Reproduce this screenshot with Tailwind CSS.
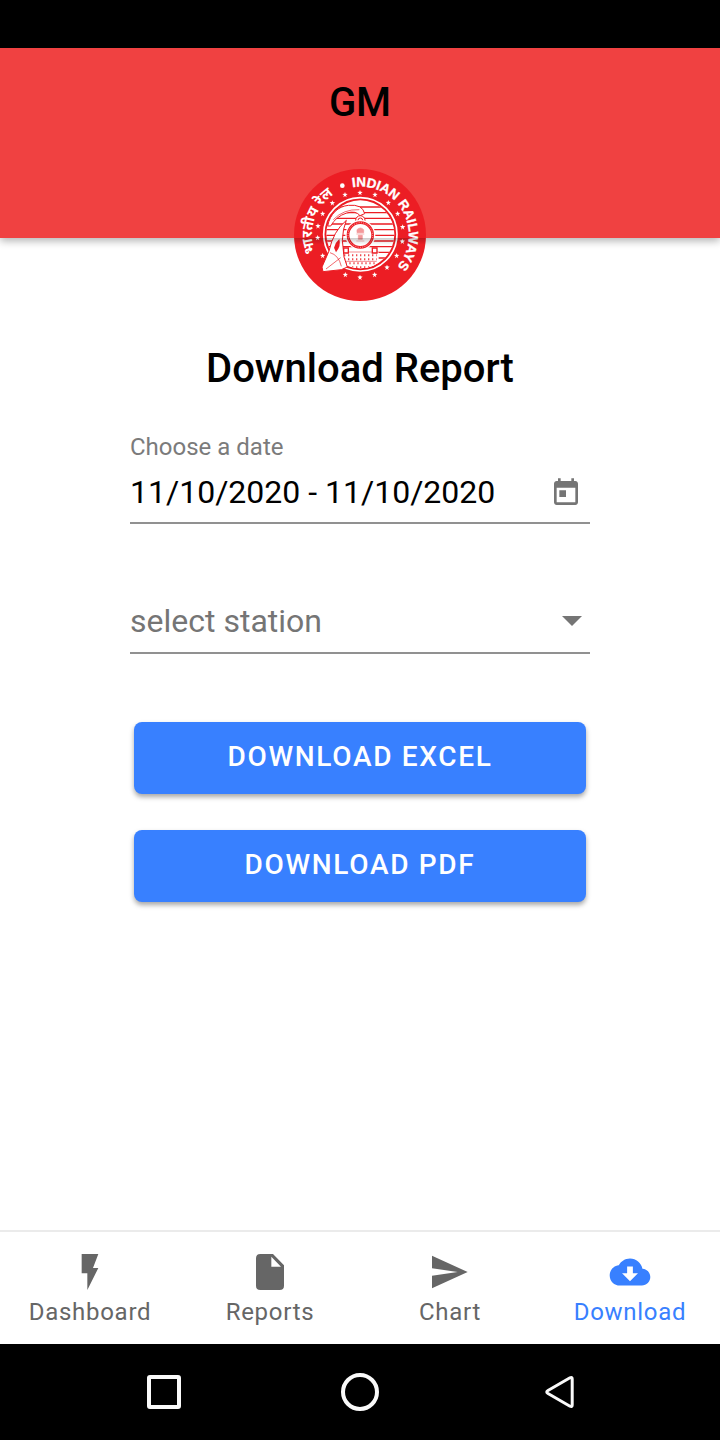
<!DOCTYPE html>
<html lang="en">
<head>
<meta charset="utf-8">
<meta name="viewport" content="width=device-width, initial-scale=1">
<title>Download Report</title>
<script src="https://cdn.jsdelivr.net/npm/@tailwindcss/browser@4"></script>
</head>
<body class="flex min-h-screen flex-col bg-white font-[Roboto,sans-serif] text-black">
<div class="h-12 bg-black"></div>
<header class="relative flex h-[190px] flex-col items-center bg-[#f04141] pt-[25px] shadow-[0_3px_8px_rgba(0,0,0,0.3)]">
  <h1 class="text-[40px] leading-[60px] font-medium">GM</h1>
  <svg class="absolute top-[121px] h-[132px] w-[132px]" viewBox="42 26 396 396" role="img" aria-label="Indian Railways">
    <defs>
      <path id="outer" d="M241 369A145 145 0 1 1 242 369"/>
      <path id="star" d="M0-8L2-3L8-2L3 2L5 8L0 4L-5 8L-3 2L-8-2L-2-3Z"/>
      <clipPath id="disc"><circle cx="241" cy="222" r="102"/></clipPath>
      <linearGradient id="shade" x2="0" y2="1"><stop stop-color="#000" stop-opacity=".2"/><stop offset="1" stop-color="#000" stop-opacity="0"/></linearGradient>
      <clipPath id="badge"><circle cx="240" cy="224" r="198"/></clipPath>
    </defs>
    <circle cx="240" cy="224" r="198" fill="#ec1d24"/>
    <g fill="#fff" font-weight="700">
      <text font-family="Liberation Sans, sans-serif" font-size="40" stroke="#fff" stroke-width="1"><textPath href="#outer" startOffset="431">INDIAN RAILWAYS</textPath></text>
      <text font-family="Noto Sans Devanagari, Noto Sans, sans-serif" font-size="44"><textPath href="#outer" startOffset="172">भारतीय रेल</textPath></text>
      <circle cx="187" cy="76" r="7"/>
    </g>
    <g fill="#fff">
      <use href="#star" x="240" y="97"/><use href="#star" x="285" y="103"/><use href="#star" x="325" y="127"/><use href="#star" x="353" y="160"/><use href="#star" x="368" y="200"/><use href="#star" x="367" y="243"/><use href="#star" x="350" y="286"/><use href="#star" x="321" y="321"/><use href="#star" x="284" y="343"/><use href="#star" x="240" y="351"/><use href="#star" x="196" y="343"/><use href="#star" x="128" y="286"/><use href="#star" x="113" y="232"/><use href="#star" x="114" y="197"/><use href="#star" x="128" y="160"/><use href="#star" x="157" y="128"/><use href="#star" x="195" y="103"/>
    </g>
    <circle cx="241" cy="222" r="110" fill="none" stroke="#fff" stroke-width="5"/>
    <circle cx="241" cy="222" r="102" fill="#fff"/>
    <g clip-path="url(#disc)">
      <path d="M130 140H350M130 157H350M130 174H350M130 191H350M130 208H350M130 225H350M130 242H350M130 259H350M130 276H350M130 293H350" stroke="#ec1d24" stroke-width="4"/>
      <path d="M186 276H296V340H186Z" fill="#fff"/>
      <path d="M192 285H290M192 297H290M196 309H286M204 321H278" stroke="#ee4a50" stroke-width="6" stroke-dasharray="4 8"/>
      <path d="M192 303H290" stroke="#ee4a50" stroke-width="2"/>
    </g>
    <path d="M143 197C150 160 175 138 205 135Q248 131 254 160L240 166Q228 150 200 158Q168 168 152 197Z" fill="#fff" stroke="#ec1d24" stroke-width="3"/>
    <path d="M160 178Q190 146 238 148" fill="none" stroke="#ec1d24" stroke-width="2"/>
    <path d="M199 180Q188 206 187 240L192 290L202 320L184 328L129 334L126 320L147 272Q160 212 199 180Z" fill="#fff" stroke="#ec1d24" stroke-width="3"/>
    <path d="M150 277Q176 284 184 318M138 326L182 292" fill="none" stroke="#ec1d24" stroke-width="2"/>
    <path d="M178 236Q184 256 168 276L162 262Q166 246 178 236Z" fill="#ec1d24"/>
    <circle cx="241" cy="180" r="14" fill="#fff" stroke="#ec1d24" stroke-width="3"/>
    <circle cx="241" cy="180" r="7" fill="none" stroke="#ec1d24" stroke-width="3"/>
    <circle cx="241" cy="224" r="45" fill="#fff"/>
    <circle cx="241" cy="224" r="37" fill="#fff" stroke="#ec1d24" stroke-width="8"/>
    <circle cx="241" cy="224" r="37" fill="none" stroke="#fff" stroke-width="2" stroke-dasharray="3 4"/>
    <path d="M231 208Q241 198 251 208V217H231ZM229 221H253M235 225H247V237H235ZM229 242H253" fill="#f4999b" stroke="#f4999b" stroke-width="2"/>
    <path d="M191 263H205V278H191ZM277 263H291V278H277Z" fill="#fff" stroke="#ec1d24" stroke-width="4"/>
    <g clip-path="url(#badge)"><rect x="42" y="233" width="396" height="20" fill="url(#shade)"/></g>
  </svg>
</header>
<main class="mx-auto flex w-full max-w-[460px] grow flex-col pt-[101px]">
  <h2 class="text-center text-[40px] leading-[60px] font-medium">Download Report</h2>
  <form class="flex flex-col pt-8">
    <label for="date" class="text-[24px] leading-8 text-[#7b7b7b]">Choose a date</label>
    <div class="flex h-[61px] items-center border-b-2 border-[#919191]">
      <input id="date" type="text" value="11/10/2020 - 11/10/2020" class="min-w-0 grow pb-0.5 text-[32px] leading-10 outline-none">
      <button type="button" aria-label="Open calendar" class="mr-2">
        <svg class="size-8" viewBox="0 0 24 24" fill="#757575"><path d="M19 3h-1V1h-2v2H8V1H6v2H5c-1.11 0-2 .9-2 2v14c0 1.1.89 2 2 2h14c1.1 0 2-.9 2-2V5c0-1.1-.9-2-2-2zm0 16H5V8h14v11zM7 10h5v5H7z"/></svg>
      </button>
    </div>
    <div class="relative mt-16 border-b-2 border-[#919191]">
      <select aria-label="select station" class="h-16 w-full appearance-none bg-transparent pt-0.5 text-[32px] text-[#757575] outline-none"><option>select station</option></select>
      <svg class="pointer-events-none absolute top-7 right-2 h-[10px] w-5" viewBox="0 0 20 10" fill="#757575"><path d="M0 0H20L10 10Z"/></svg>
    </div>
    <div class="flex flex-col gap-9 px-1 pt-[68px]">
      <button type="button" class="h-[72px] rounded-lg bg-[#3880ff] pb-0.5 text-[28px] font-medium tracking-[0.06em] text-white shadow-[0_3px_5px_rgba(0,0,0,0.35)]">DOWNLOAD EXCEL</button>
      <button type="button" class="h-[72px] rounded-lg bg-[#3880ff] pb-0.5 text-[28px] font-medium tracking-[0.06em] text-white shadow-[0_3px_5px_rgba(0,0,0,0.35)]">DOWNLOAD PDF</button>
    </div>
  </form>
</main>
<nav aria-label="Main" class="grid h-[114px] grid-cols-4 border-t-2 border-[#ebebeb] text-2xl leading-9 tracking-[0.03em] text-[#666]">
  <a href="#dashboard" class="flex flex-col items-center pt-[18px]">
    <svg class="size-11" viewBox="204 90 132 132" fill="currentColor"><path d="M245 102H295L279 144H295L262 210V160H245Z"/></svg>Dashboard</a>
  <a href="#reports" class="flex flex-col items-center pt-[18px]">
    <svg class="size-11" viewBox="744 90 132 132" fill="currentColor"><path fill-rule="evenodd" d="M781 102H819L852 136V197Q852 210 839 210H781Q768 210 768 197V115Q768 102 781 102ZM814 110V140H843Z"/></svg>Reports</a>
  <a href="#chart" class="flex flex-col items-center pt-[18px]">
    <svg class="size-11" viewBox="204 90 132 132" fill="currentColor"><path d="M216 107L323 156L216 205V167L293 156L216 145Z"/></svg>Chart</a>
  <a href="#download" aria-current="page" class="flex flex-col items-center pt-[18px] text-[#3880ff]">
    <svg class="size-11" viewBox="-1 -1 26 26" fill="currentColor"><path d="M19.35 10.04C18.67 6.59 15.64 4 12 4 9.11 4 6.6 5.64 5.35 8.04 2.34 8.36 0 10.91 0 14c0 3.31 2.69 6 6 6h13c2.76 0 5-2.24 5-5 0-2.64-2.05-4.78-4.65-4.96zM16.7 12.8L12 17.5 7.3 12.8H10.3V8.8H13.7V12.8Z"/></svg>Download</a>
</nav>
<footer class="h-24 bg-black">
  <div class="mx-auto grid h-full max-w-[588px] grid-cols-3 place-items-center">
    <button type="button" aria-label="Recent apps"><svg class="size-12" viewBox="0 0 48 48" fill="none" stroke="#fafafa" stroke-width="4"><rect x="9" y="9" width="30" height="30" rx="1"/></svg></button>
    <button type="button" aria-label="Home"><svg class="size-12" viewBox="0 0 48 48" fill="none" stroke="#fafafa" stroke-width="4"><circle cx="24" cy="24" r="17"/></svg></button>
    <button type="button" aria-label="Back"><svg class="size-12" viewBox="0 0 48 48" fill="none" stroke="#fafafa" stroke-width="3" stroke-linejoin="round"><path d="M16 25.500Q13.500 24 16 22.500L38 9.800Q40.200 8.800 40.200 11V37Q40.200 39.200 38 38.200Z"/></svg></button>
  </div>
</footer>
</body>
</html>
